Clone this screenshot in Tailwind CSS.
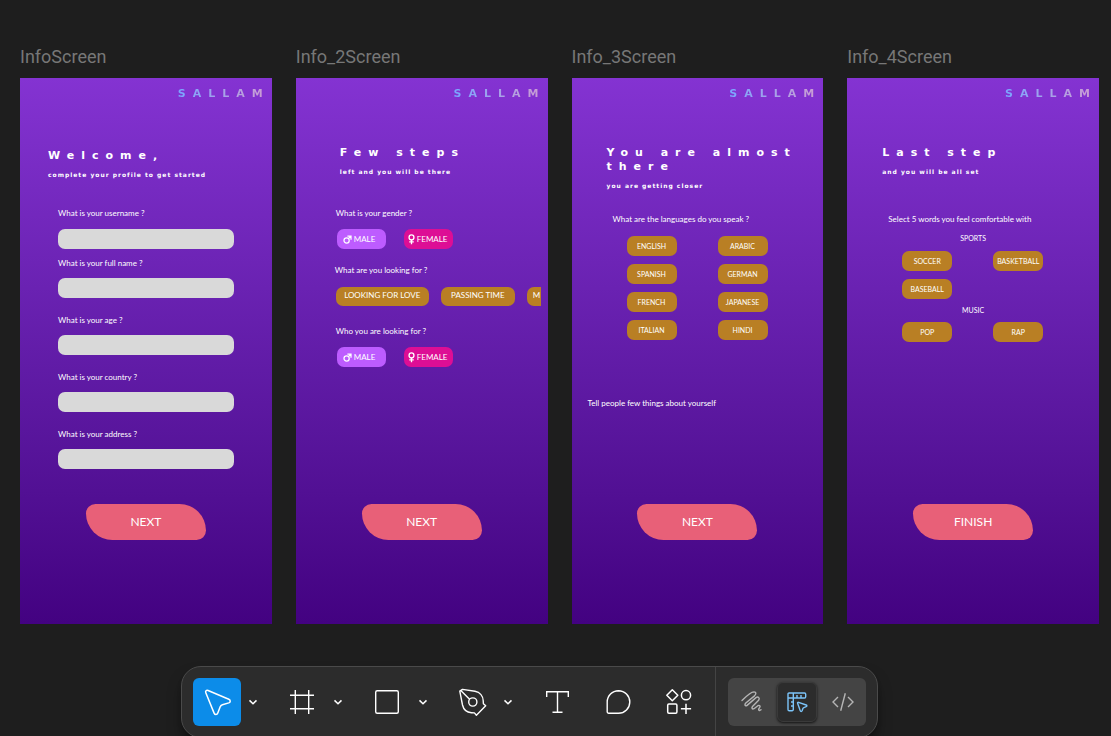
<!DOCTYPE html>
<html lang="en">
<head>
<meta charset="utf-8">
<title>Info screens</title>
<script src="https://cdn.jsdelivr.net/npm/@tailwindcss/browser@4"></script>
</head>
<body class="bg-[#1e1e1e] font-[Lato,sans-serif] text-white">
<svg class="hidden">
  <symbol id="male" viewBox="0 0 10 10"><g fill="none" stroke="currentColor" stroke-width="1.4"><circle cx="4" cy="6" r="2.900"/><path d="M6 4 8.600 1.400M4.900 1.200h4v4"/></g></symbol>
  <symbol id="female" viewBox="0 0 8 12"><g fill="none" stroke="currentColor" stroke-width="1.5"><circle cx="4" cy="3.600" r="2.800"/><path d="M4 6.300v5.200M1.400 8.800h5.200"/></g></symbol>
  <symbol id="chev" viewBox="0 0 10 10"><path d="M1.500 3.400 5 6.700l3.500-3.300" fill="none" stroke="currentColor" stroke-width="1.500"/></symbol>
</svg>
<div class="flex h-screen flex-col overflow-hidden">
  <main class="grid grid-cols-4 gap-6 pt-[45px] pr-3 pl-5">

    <section>
      <h2 class="font-[Roboto,sans-serif] text-[18px] leading-6 text-[#777777]">InfoScreen</h2>
      <div class="mt-[9px] flex h-[546px] flex-col bg-linear-to-b from-[#8433d2] to-[#430281] pt-[9px] pb-[84px]">
        <p class="mr-0.5 self-end bg-linear-to-r from-[#78a5ff] to-[#cf9bd0] bg-clip-text font-['DejaVu_Sans',sans-serif] text-[11px] leading-[14px] font-bold tracking-[7px] text-transparent">SALLAM</p>
        <h1 class="mt-12 px-7 font-['DejaVu_Sans',sans-serif] text-[11px] leading-[14px] font-bold tracking-[7px]">Welcome,</h1>
        <p class="mt-1.5 px-7 font-['DejaVu_Sans',sans-serif] text-[6px] leading-3 font-bold tracking-[1px]">complete your profile to get started</p>
        <form class="mt-[26px] flex flex-col px-[38px] text-[8px] leading-3">
          <label for="username">What is your username ?</label>
          <input id="username" class="mt-[10px] h-5 rounded-[7px] bg-[#d9d9d9] px-2 text-black">
          <label for="fullname" class="mt-2">What is your full name ?</label>
          <input id="fullname" class="mt-[9px] h-5 rounded-[7px] bg-[#d9d9d9] px-2 text-black">
          <label for="age" class="mt-4">What is your age ?</label>
          <input id="age" class="mt-[9px] h-5 rounded-[7px] bg-[#d9d9d9] px-2 text-black">
          <label for="country" class="mt-4">What is your country ?</label>
          <input id="country" class="mt-[9px] h-5 rounded-[7px] bg-[#d9d9d9] px-2 text-black">
          <label for="address" class="mt-4">What is your address ?</label>
          <input id="address" class="mt-[9px] h-5 rounded-[7px] bg-[#d9d9d9] px-2 text-black">
        </form>
        <button class="mt-auto h-9 w-[120px] self-center rounded-tl-[10px] rounded-tr-[28px] rounded-br-[10px] rounded-bl-[28px] bg-[#e86078] text-xs">NEXT</button>
      </div>
    </section>

    <section>
      <h2 class="font-[Roboto,sans-serif] text-[18px] leading-6 text-[#777777]">Info_2Screen</h2>
      <div class="mt-[9px] flex h-[546px] flex-col bg-linear-to-b from-[#8433d2] to-[#430281] pt-[9px] pb-[84px]">
        <p class="mr-0.5 self-end bg-linear-to-r from-[#78a5ff] to-[#cf9bd0] bg-clip-text font-['DejaVu_Sans',sans-serif] text-[11px] leading-[14px] font-bold tracking-[7px] text-transparent">SALLAM</p>
        <h1 class="mt-[45px] pl-11 font-['DejaVu_Sans',sans-serif] text-[11px] leading-[14px] font-bold tracking-[7px]">Few steps</h1>
        <p class="mt-1.5 pl-11 font-['DejaVu_Sans',sans-serif] text-[6px] leading-3 font-bold tracking-[1px]">left and you will be there</p>
        <h3 class="mt-[29px] pl-10 text-[8px] leading-3">What is your gender ?</h3>
        <div class="mt-[10px] flex gap-[18px] pl-[41px] text-[8px]">
          <button class="flex h-5 w-[49px] items-center gap-0.5 rounded-[7px] bg-[#bd5cff] pl-1.5"><svg class="size-[9px]"><use href="#male"/></svg>MALE</button>
          <button class="flex h-5 w-[49px] items-center gap-0.5 rounded-[7px] bg-[#dd0e95] pl-1"><svg class="h-[11px] w-[7px]"><use href="#female"/></svg>FEMALE</button>
        </div>
        <h3 class="mt-[15px] pl-[39px] text-[8px] leading-3">What are you looking for ?</h3>
        <div class="mt-[11px] mr-[7px] ml-10 flex gap-3 overflow-hidden text-[8px] leading-3">
          <button class="h-[19px] w-[93px] shrink-0 rounded-[7px] bg-[#b97f24] pb-1">LOOKING FOR LOVE</button>
          <button class="h-[19px] w-[74px] shrink-0 rounded-[7px] bg-[#b97f24] pb-1">PASSING TIME</button>
          <button class="h-[19px] w-[74px] shrink-0 rounded-[7px] bg-[#b97f24] pb-1 pl-1.5 text-left">M</button>
        </div>
        <h3 class="mt-[19px] pl-10 text-[8px] leading-3">Who you are looking for ?</h3>
        <div class="mt-[10px] flex gap-[18px] pl-[41px] text-[8px]">
          <button class="flex h-5 w-[49px] items-center gap-0.5 rounded-[7px] bg-[#bd5cff] pl-1.5"><svg class="size-[9px]"><use href="#male"/></svg>MALE</button>
          <button class="flex h-5 w-[49px] items-center gap-0.5 rounded-[7px] bg-[#dd0e95] pl-1"><svg class="h-[11px] w-[7px]"><use href="#female"/></svg>FEMALE</button>
        </div>
        <button class="mt-auto h-9 w-[120px] self-center rounded-tl-[10px] rounded-tr-[28px] rounded-br-[10px] rounded-bl-[28px] bg-[#e86078] text-xs">NEXT</button>
      </div>
    </section>

    <section>
      <h2 class="font-[Roboto,sans-serif] text-[18px] leading-6 text-[#777777]">Info_3Screen</h2>
      <div class="mt-[9px] flex h-[546px] flex-col bg-linear-to-b from-[#8433d2] to-[#430281] pt-[9px] pb-[84px]">
        <p class="mr-0.5 self-end bg-linear-to-r from-[#78a5ff] to-[#cf9bd0] bg-clip-text font-['DejaVu_Sans',sans-serif] text-[11px] leading-[14px] font-bold tracking-[7px] text-transparent">SALLAM</p>
        <h1 class="mt-[45px] pr-6 pl-[35px] font-['DejaVu_Sans',sans-serif] text-[11px] leading-[14px] font-bold tracking-[7px]">You are almost there</h1>
        <p class="mt-1.5 pl-[35px] font-['DejaVu_Sans',sans-serif] text-[6px] leading-3 font-bold tracking-[1px]">you are getting closer</p>
        <h3 class="mt-[21px] pl-[41px] text-[8px] leading-3">What are the languages do you speak ?</h3>
        <div class="mt-[11px] grid grid-cols-[50px_50px] gap-x-[41px] gap-y-2 pl-[55px] text-[7px]">
          <button class="h-5 rounded-[7px] bg-[#b97f24]">ENGLISH</button>
          <button class="h-5 rounded-[7px] bg-[#b97f24]">ARABIC</button>
          <button class="h-5 rounded-[7px] bg-[#b97f24]">SPANISH</button>
          <button class="h-5 rounded-[7px] bg-[#b97f24]">GERMAN</button>
          <button class="h-5 rounded-[7px] bg-[#b97f24]">FRENCH</button>
          <button class="h-5 rounded-[7px] bg-[#b97f24]">JAPANESE</button>
          <button class="h-5 rounded-[7px] bg-[#b97f24]">ITALIAN</button>
          <button class="h-5 rounded-[7px] bg-[#b97f24]">HINDI</button>
        </div>
        <p class="mt-[57px] pl-4 text-[8px] leading-3">Tell people few things about yourself</p>
        <button class="mt-auto h-9 w-[120px] self-center rounded-tl-[10px] rounded-tr-[28px] rounded-br-[10px] rounded-bl-[28px] bg-[#e86078] text-xs">NEXT</button>
      </div>
    </section>

    <section>
      <h2 class="font-[Roboto,sans-serif] text-[18px] leading-6 text-[#777777]">Info_4Screen</h2>
      <div class="mt-[9px] flex h-[546px] flex-col bg-linear-to-b from-[#8433d2] to-[#430281] pt-[9px] pb-[84px]">
        <p class="mr-0.5 self-end bg-linear-to-r from-[#78a5ff] to-[#cf9bd0] bg-clip-text font-['DejaVu_Sans',sans-serif] text-[11px] leading-[14px] font-bold tracking-[7px] text-transparent">SALLAM</p>
        <h1 class="mt-[45px] pl-[35px] font-['DejaVu_Sans',sans-serif] text-[11px] leading-[14px] font-bold tracking-[7px]">Last step</h1>
        <p class="mt-1.5 pl-[35px] font-['DejaVu_Sans',sans-serif] text-[6px] leading-3 font-bold tracking-[1px]">and you will be all set</p>
        <h3 class="mt-[35px] pl-[41px] text-[8px] leading-3">Select 5 words you feel comfortable with</h3>
        <h4 class="mt-[7px] text-center text-[7px] leading-3">SPORTS</h4>
        <div class="mt-[7px] grid grid-cols-[50px_50px] gap-x-[41px] gap-y-2 pl-[55px] text-[7px]">
          <button class="h-5 rounded-[7px] bg-[#b97f24]">SOCCER</button>
          <button class="h-5 rounded-[7px] bg-[#b97f24]">BASKETBALL</button>
          <button class="h-5 rounded-[7px] bg-[#b97f24]">BASEBALL</button>
        </div>
        <h4 class="mt-[5px] text-center text-[7px] leading-3">MUSIC</h4>
        <div class="mt-1.5 grid grid-cols-[50px_50px] gap-x-[41px] pl-[55px] text-[7px]">
          <button class="h-5 rounded-[7px] bg-[#b97f24]">POP</button>
          <button class="h-5 rounded-[7px] bg-[#b97f24]">RAP</button>
        </div>
        <button class="mt-auto h-9 w-[120px] self-center rounded-tl-[10px] rounded-tr-[28px] rounded-br-[10px] rounded-bl-[28px] bg-[#e86078] text-xs">FINISH</button>
      </div>
    </section>
  </main>

  <div class="mt-[42px] flex shrink-0 justify-center pr-[52px]">
    <div role="toolbar" aria-label="Tools" class="flex h-[72px] items-center rounded-[20px] border border-[#4a4a4a] bg-[#2c2c2c] pr-[11px] pl-[11px] shadow-lg shadow-black/50">
      <div class="flex items-center gap-[13px]">
        <div class="flex">
          <button aria-label="Move" class="grid size-12 place-items-center rounded-md bg-[#0c8ce9]">
            <svg class="size-8" viewBox="0 0 32 32" fill="none" stroke="currentColor" stroke-width="1.500" stroke-linejoin="round"><path d="M4.800 6.800c-.7-1.700.6-3 2.300-2.300L27.800 13.300c1.900.8 1.900 2.900 0 3.600l-6.400 1.900c-1.300.4-1.900 1-2.300 2.300l-2.300 6c-.7 1.900-2.900 1.900-3.700 0z"/></svg>
          </button>
          <button aria-label="Move options" class="grid w-6 place-items-center"><svg class="size-[10px]"><use href="#chev"/></svg></button>
        </div>
        <div class="flex">
          <button aria-label="Frame" class="grid size-12 place-items-center">
            <svg class="size-8" viewBox="0 0 32 32" fill="none" stroke="currentColor" stroke-width="1.400"><path d="M9.300 4v24M22.700 4v24M4 9.300h24M4 22.700h24"/></svg>
          </button>
          <button aria-label="Frame options" class="grid w-6 place-items-center"><svg class="size-[10px]"><use href="#chev"/></svg></button>
        </div>
        <div class="flex">
          <button aria-label="Rectangle" class="grid size-12 place-items-center">
            <svg class="size-8" viewBox="0 0 32 32" fill="none" stroke="currentColor" stroke-width="1.400"><rect x="4.700" y="4.700" width="22.600" height="22.600" rx="1.500"/></svg>
          </button>
          <button aria-label="Shape options" class="grid w-6 place-items-center"><svg class="size-[10px]"><use href="#chev"/></svg></button>
        </div>
        <div class="flex">
          <button aria-label="Pen" class="grid size-12 place-items-center">
            <svg class="size-8" viewBox="0 0 32 32" fill="none" stroke="currentColor" stroke-width="1.400" stroke-linejoin="round"><path d="M3.800 5.200 6.500 3.400 19 5.200c5 1 8.100 5 8.200 9.500l.2 3 2.300 2.100-9.300 9.400-2-2.300-3-.2c-4.400-.3-7.800-3-8.900-7.700z"/><path d="m4.800 4.400 8.800 8.800"/><circle cx="16.800" cy="16" r="4.100"/></svg>
          </button>
          <button aria-label="Pen options" class="grid w-6 place-items-center"><svg class="size-[10px]"><use href="#chev"/></svg></button>
        </div>
        <button aria-label="Text" class="grid size-12 place-items-center">
          <svg class="size-8" viewBox="0 0 32 32" fill="none" stroke="currentColor" stroke-width="1.400"><path d="M5.700 11V5.700h21.600V11M16.500 5.700v20.600M11.500 26.300h10"/></svg>
        </button>
        <button aria-label="Comment" class="grid size-12 place-items-center">
          <svg class="size-8" viewBox="0 0 32 32" fill="none" stroke="currentColor" stroke-width="1.400"><path d="M16.500 4.700a11.300 11.300 0 0 1 0 22.600H6.700a1.500 1.500 0 0 1-1.500-1.500V16a11.300 11.300 0 0 1 11.300-11.300z"/></svg>
        </button>
        <button aria-label="Actions" class="grid size-12 place-items-center">
          <svg class="size-8" viewBox="0 0 32 32" fill="none" stroke="currentColor" stroke-width="1.500" stroke-linejoin="round"><path d="M9.300 3.700 14.800 9.200 9.300 14.700 3.800 9.200z"/><circle cx="23" cy="9.200" r="4.600"/><rect x="4.700" y="18" width="9.200" height="9.200" rx="1.200"/><path d="M23 17.700v10.200M17.900 22.800h10.200"/></svg>
        </button>
      </div>
      <div class="ml-3 h-full w-px bg-[#444444]"></div>
      <div class="ml-3 flex h-12 items-center rounded-md bg-[#444444] text-[#b5b5b5]">
        <button aria-label="Draw" class="grid h-12 w-[46px] place-items-center">
          <svg class="size-6" viewBox="0 0 24 24" fill="none" stroke="currentColor" stroke-width="1.400" stroke-linecap="round" stroke-linejoin="round"><path d="M3 10.500C7.500 6 12.500 2 15 1.900c2.500 0 2.300 2 .5 4L6.800 13c-1.600 1.800-.8 3.400 1 2.600L17 7.600c2-1.300 4.300.3 2.600 2.700L13.500 16.500c-1.200 1.600-.3 3 1.500 2.200l3.900-3c1.700-.9 2.800.2 1.800 1.700-1.200 1.700-1.400 2.500-.6 2.900.6.300 1.300 0 1.900-.5"/></svg>
        </button>
        <div class="grid w-[46px] place-items-center">
          <button aria-label="Design" aria-pressed="true" class="grid h-10 w-10 place-items-center rounded-md border border-[#3a3a3a] bg-[#2c2c2c] text-[#7cc4f8] shadow-sm shadow-black/60">
            <svg class="size-6" viewBox="0 0 24 24" fill="none" stroke="currentColor" stroke-width="1.400" stroke-linejoin="round"><path d="M4 3h15.500a1.200 1.200 0 0 1 1.200 1.200v2.600A1.200 1.200 0 0 1 19.500 8H8.300v11.500a1.200 1.200 0 0 1-1.200 1.200H4.200A1.200 1.200 0 0 1 3 19.500V4a1 1 0 0 1 1-1zM3 8h5.300V3M12 5v3M16 5v3M6 12h2.300M6 16h2.300"/><path d="M12.600 13.300c-.3-.8.200-1.300 1-1l7.600 2.700c.9.300.9 1.400 0 1.700l-2.300.9c-.5.200-.8.500-1 1l-.9 2.300c-.3.900-1.400.9-1.700 0z"/></svg>
          </button>
        </div>
        <button aria-label="Dev mode" class="grid h-12 w-[46px] place-items-center">
          <svg class="size-6" viewBox="0 0 24 24" fill="none" stroke="currentColor" stroke-width="1.400"><path d="M7 7 2 12l5 5M17 7l5 5-5 5M14.300 3.300 9.700 20.700"/></svg>
        </button>
      </div>
    </div>
  </div>
</div>
</body>
</html>
